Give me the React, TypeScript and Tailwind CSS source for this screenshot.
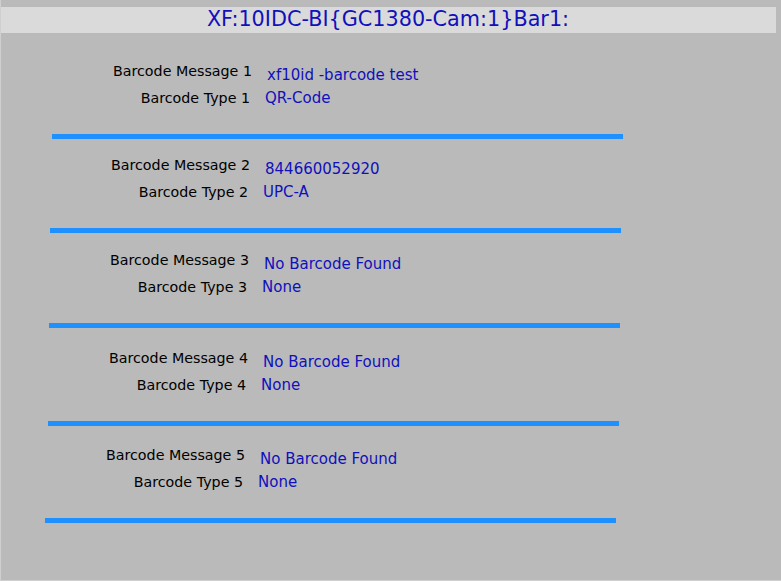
const groups = [
  { n: 1, msg: "xf10id -barcode test", type: "QR-Code", indent: "ml-[51px]", top: "mt-[28px]" },
  { n: 2, msg: "844660052920", type: "UPC-A", indent: "ml-[49px]", top: "mt-[16px]" },
  { n: 3, msg: "No Barcode Found", type: "None", indent: "ml-[48px]", top: "mt-[17px]" },
  { n: 4, msg: "No Barcode Found", type: "None", indent: "ml-[47px]", top: "mt-[20px]" },
  { n: 5, msg: "No Barcode Found", type: "None", indent: "ml-[44px]", top: "mt-[19px]" },
]

function Row({ label, value, shifted, lower }: { label: string; value: string; shifted?: boolean; lower?: boolean }) {
  return (
    <div className={`flex items-start ${shifted ? "pl-[2px]" : ""}`}>
      <div className="w-[198px] shrink-0 text-right text-[14.25px] leading-[20px] text-black whitespace-nowrap">{label}</div>
      <div className={`ml-[15px] text-[15px] leading-[20px] text-[#1010bc] whitespace-nowrap ${lower ? "mt-[4px]" : ""}`}>
        {value}
      </div>
    </div>
  )
}

export default function App() {
  return (
    <div
      className="w-[781px] h-[581px] bg-[#bababa] border-l border-b border-[#cfcfcf] overflow-hidden flex flex-col pt-[7px]"
      style={{ fontFamily: '"DejaVu Sans", sans-serif' }}
    >
      <div className="w-[776px] -ml-px h-[26px] bg-[#dadada] flex items-center justify-center text-[20.75px] text-[#1010bc]">
        XF:10IDC-BI{"{"}GC1380-Cam:1{"}"}Bar1:
      </div>

      {groups.map((g) => (
        <div key={g.n} className={`${g.top} ${g.indent} flex flex-col`}>
          <div className="h-[27px]">
            <Row label={`Barcode Message ${g.n}`} value={g.msg} shifted lower />
          </div>
          <Row label={`Barcode Type ${g.n}`} value={g.type} />
          <div className="mt-[26px] w-[571px] h-[5px] bg-[#1e90ff]" />
        </div>
      ))}
    </div>
  )
}
